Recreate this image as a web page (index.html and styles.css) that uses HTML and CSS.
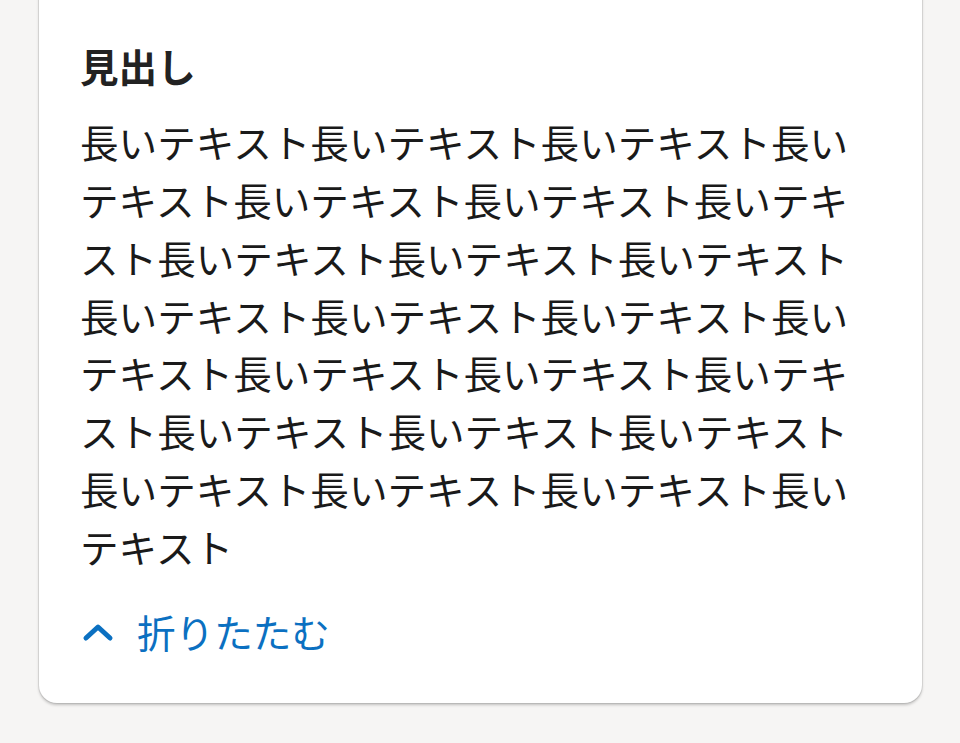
FILE: index.html
```html
<!DOCTYPE html>
<html lang="ja">
<head>
  <meta charset="utf-8">
  <link rel="stylesheet" href="styles.css">
</head>
<body>
  <main class="page">
    <section class="card">
      <h2 class="card-title">見出し</h2>
      <p class="card-text">長いテキスト長いテキスト長いテキスト長いテキスト長いテキスト長いテキスト長いテキスト長いテキスト長いテキスト長いテキスト長いテキスト長いテキスト長いテキスト長いテキスト長いテキスト長いテキスト長いテキスト長いテキスト長いテキスト長いテキスト長いテキスト長いテキスト長いテキスト長いテキスト</p>
      <a class="toggle" href="#">
        <svg class="toggle-icon" viewBox="0 0 34 20" width="34" height="20" aria-hidden="true">
          <polyline points="5,16 17,5 29,16" fill="none" stroke="currentColor" stroke-width="5" stroke-linecap="round" stroke-linejoin="round"/>
        </svg>
        <span>折りたたむ</span>
      </a>
    </section>
  </main>
</body>
</html>
```

FILE: styles.css
```css
body {
  margin: 0;
  background: #f6f5f4;
  color: #222;
  font-family: "Noto Sans CJK JP", "Noto Sans", sans-serif;
}
.page {
  padding: 0 38px 40px 39px;
}
/* card continues above the fold, so only the bottom corners are shown */
.card {
  margin-top: -24px;
  padding: 61px 40px 42px 41px;
  background: #fff;
  border-radius: 18px;
  box-shadow: 0 0 0 1px rgba(0,0,0,0.07), 0 2px 3px rgba(0,0,0,0.22);
}
.card-title {
  margin: 0 0 18px;
  font-size: 38.6px;
  line-height: 1.5;
  font-weight: 700;
  color: #222;
}
.card-text {
  margin: 0 0 27px;
  font-size: 38.6px;
  line-height: 1.5;
  color: #1a1a1a;
}
.toggle {
  display: flex;
  align-items: center;
  gap: 22px;
  font-size: 38.6px;
  line-height: 1.5;
  color: #0b70c1;
  text-decoration: none;
}
.toggle-icon {
  display: block;
  margin-left: 1px;
}
```
